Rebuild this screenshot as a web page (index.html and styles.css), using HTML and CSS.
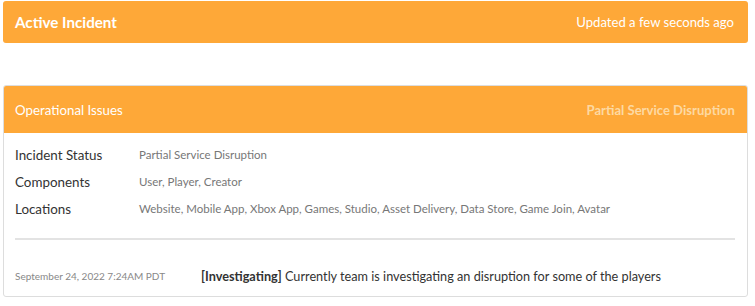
FILE: index.html
```html
<!DOCTYPE html>
<html>
	<head>
		<meta charset="UTF-8">
		<title>Incident</title>
		<link rel="stylesheet" href="styles.css">
	</head>
	<body>
		<div class="page">
			<div class="topbar">
				<h2>Active Incident</h2>
				<span class="updated">Updated a few seconds ago</span>
			</div>

			<div class="card">
				<div class="card-head">
					<span class="head-title">Operational Issues</span>
					<span class="head-status">Partial Service Disruption</span>
				</div>
				<div class="card-body">
					<div class="info">
						<div class="row">
							<span class="label">Incident Status</span>
							<span class="value">Partial Service Disruption</span>
						</div>
						<div class="row">
							<span class="label">Components</span>
							<span class="value">User, Player, Creator</span>
						</div>
						<div class="row">
							<span class="label">Locations</span>
							<span class="value">Website, Mobile App, Xbox App, Games, Studio, Asset Delivery, Data Store, Game Join, Avatar</span>
						</div>
					</div>
					<div class="line"></div>
					<div class="update">
						<span class="date">September 24, 2022 7:24AM PDT</span>
						<p class="msg"><b>[Investigating]</b> Currently team is investigating an disruption for some of the players</p>
					</div>
				</div>
			</div>
		</div>
	</body>
</html>
```
FILE: styles.css
```css
*{
	margin: 0;
	padding: 0;
	box-sizing: border-box;
}
body{
	font-family: Lato, "Open Sans", sans-serif;
	background: #fff;
	color: #333;
}
.page{
	padding: 1px 7px 0 3px;
}
.topbar{
	height: 42px;
	background: #fea838;
	border-radius: 3px;
	display: flex;
	align-items: center;
	justify-content: space-between;
	padding: 0 14px 0 12px;
	color: #fff;
}
.topbar h2{
	font-size: 15.2px;
	font-weight: bold;
}
.updated{
	font-size: 13.1px;
}
.card{
	margin-top: 42px;
	border: 1px solid #ddd;
	border-radius: 3px;
	overflow: hidden;
}
.card-head{
	height: 47px;
	background: #fea838;
	display: flex;
	align-items: center;
	justify-content: space-between;
	padding: 0 12px 0 11px;
	font-size: 13.3px;
}
.head-title{
	color: #fff;
}
.head-status{
	color: #fdd9a2;
	font-weight: bold;
	font-size: 13.1px;
}
.card-body{
	padding: 8px 12px 12px 11px;
}
.row{
	display: flex;
	align-items: center;
	height: 27px;
}
.label{
	width: 124px;
	font-size: 13.4px;
	color: #333;
}
.value{
	font-size: 11.5px;
	color: #777;
}
.line{
	margin-top: 16px;
	border-top: 2px solid #e3e3e3;
}
.update{
	display: flex;
	align-items: center;
	margin-top: 28px;
}
.date{
	width: 186px;
	font-size: 10px;
	color: #888;
}
.msg{
	font-size: 12.7px;
	color: #333;
}
```
